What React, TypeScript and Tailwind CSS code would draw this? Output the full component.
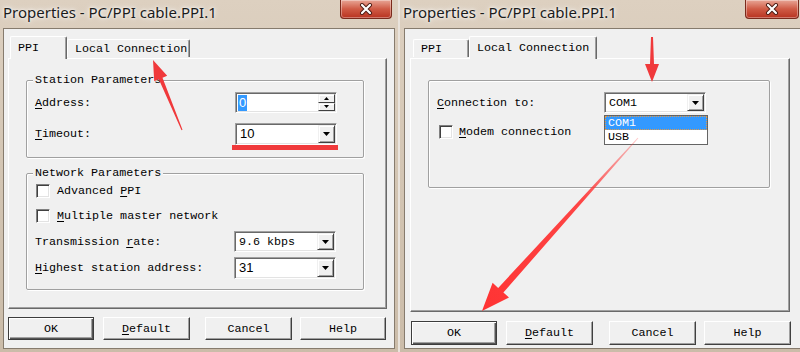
import type { ReactNode } from "react";

const mono = "font-['Liberation_Mono','DejaVu_Sans_Mono',monospace] text-[11.7px] leading-[14px] text-black";

function Acc({ children }: { children: ReactNode }) {
  return <span className="underline underline-offset-[2px]">{children}</span>;
}

function TitleBar({ closeWidth, closeRight }: { closeWidth: number; closeRight: string }) {
  return (
    <div className="flex h-[28px] items-start">
      <span className="pl-[3px] pt-[2px] font-['Noto_Sans',sans-serif] text-[15px] leading-[20px] text-[#1b1b1b] [text-shadow:0_0_6px_#fff,0_0_3px_#fff]">
        Properties - PC/PPI cable.PPI.1
      </span>
      <div
        style={{ width: closeWidth }}
        className={`ml-auto ${closeRight} flex h-[19px] items-center justify-center rounded-b-[4px] border border-t-0 border-[#7a2a1c] bg-linear-to-b from-[#e7a596] via-[#cf5a45] to-[#b8321f] shadow-[inset_0_0_0_1px_rgba(255,255,255,0.35)]`}
      >
        <svg width="16" height="12" viewBox="0 0 16 12">
          <path d="M4 2 L12 10 M12 2 L4 10" stroke="#4a1a12" strokeWidth="4" strokeLinecap="round" />
          <path d="M4 2 L12 10 M12 2 L4 10" stroke="#fff" strokeWidth="2.2" strokeLinecap="round" />
        </svg>
      </div>
    </div>
  );
}

function Tab({ label, active, width, className = "" }: { label: string; active?: boolean; width: number; className?: string }) {
  return (
    <div
      style={{ width }}
      className={`${className} flex items-center rounded-t-[2px] border-l border-r border-t border-l-white border-t-white border-r-[#696969] bg-[#f0f0f0] pl-[7px] shadow-[inset_-1px_0_0_#a0a0a0] ${mono} ${
        active ? "relative z-10 -mb-px h-[23px] pb-[1px]" : "h-[18px]"
      }`}
    >
      {label}
    </div>
  );
}

function Button({ children, width, height, primary }: { children: ReactNode; width: number; height: number; primary?: boolean }) {
  return (
    <div
      style={{ width, height }}
      className={`flex items-center justify-center border ${
        primary ? "border-[#3c3c3c] shadow-[inset_1px_1px_0_#fff,inset_-1px_-1px_0_#555,inset_-2px_-2px_0_#a0a0a0]" : "border-l-white border-t-white border-r-[#404040] border-b-[#404040] shadow-[inset_-1px_-1px_0_#a0a0a0]"
      } bg-[#f0f0f0] ${mono}`}
    >
      {children}
    </div>
  );
}

function DropArrow() {
  return (
    <div className="flex h-full w-[17px] items-center justify-center border border-l-[#f0f0f0] border-t-[#f0f0f0] border-r-[#404040] border-b-[#404040] bg-[#f0f0f0] shadow-[inset_1px_1px_0_#fff,inset_-1px_-1px_0_#a0a0a0]">
      <svg width="7" height="4" viewBox="0 0 7 4">
        <path d="M0 0 H7 L3.5 4 Z" fill="#000" />
      </svg>
    </div>
  );
}

function Sunken({ children, width, height }: { children: ReactNode; width: number; height: number }) {
  return (
    <div
      style={{ width, height }}
      className="flex border border-l-[#a0a0a0] border-t-[#a0a0a0] border-r-white border-b-white bg-white p-px shadow-[inset_1px_1px_0_#696969,inset_-1px_-1px_0_#e3e3e3]"
    >
      {children}
    </div>
  );
}

function Combo({ value, width, height = 21, sans }: { value: string; width: number; height?: number; sans?: boolean }) {
  return (
    <Sunken width={width} height={height}>
      <span className={`flex flex-1 items-center pl-[3px] ${sans ? "font-['Liberation_Sans',sans-serif] text-[13px] text-black" : mono}`}>{value}</span>
      <DropArrow />
    </Sunken>
  );
}

function Spinner() {
  return (
    <Sunken width={102} height={21}>
      <span className="flex flex-1 items-center pl-[1px]">
        <span className="bg-[#3399ff] px-[1px] font-['Liberation_Sans',sans-serif] text-[13px] leading-[16px] text-white">0</span>
      </span>
      <div className="flex w-[17px] flex-col">
        {["M0 4 H5 L2.5 1 Z", "M0 1 H5 L2.5 4 Z"].map((d) => (
          <div key={d} className="flex flex-1 items-center justify-center border border-l-[#f0f0f0] border-t-[#f0f0f0] border-r-[#404040] border-b-[#404040] bg-[#f0f0f0] shadow-[inset_1px_1px_0_#fff]">
            <svg width="5" height="5" viewBox="0 0 5 5">
              <path d={d} fill="#000" />
            </svg>
          </div>
        ))}
      </div>
    </Sunken>
  );
}

function Check() {
  return <div className="h-[14px] w-[14px] shrink-0 border border-l-[#808080] border-t-[#808080] border-r-white border-b-white bg-white shadow-[inset_1px_1px_0_#404040,inset_-1px_-1px_0_#e3e3e3]" />;
}

function Group({ title, width, height, className = "", children }: { title?: string; width: number; height: number; className?: string; children: ReactNode }) {
  return (
    <div
      style={{ width, height }}
      className={`${className} rounded-[2px] border border-[#a0a0a0] shadow-[inset_1px_1px_0_#fff,1px_1px_0_#fff]`}
    >
      {title ? <div className={`-mt-[8px] ml-[6px] w-fit bg-[#f0f0f0] px-[2px] ${mono}`}>{title}</div> : null}
      {children}
    </div>
  );
}

function Row({ label, labelWidth, children, className = "" }: { label: ReactNode; labelWidth: number; children: ReactNode; className?: string }) {
  return (
    <div className={`flex items-center ${className}`}>
      <span style={{ width: labelWidth }} className={`pl-[8px] ${mono}`}>{label}</span>
      {children}
    </div>
  );
}

function PpiDialog() {
  return (
    <div className="flex w-[398px] flex-col bg-linear-to-b from-[#ddd0c0] via-[#d3c5b3] to-[#cbbca9]">
      <TitleBar closeWidth={52} closeRight="mr-[6px]" />
      <div className="mx-[3px] mb-[3px] flex-1 border border-[#867b6d] bg-[#f0f0f0] pl-[4px] pt-[7px]">
        <div className="flex items-end pl-[2px]">
          <Tab label="PPI" active width={57} />
          <Tab label="Local Connection" width={123} className="mb-px" />
        </div>
        <div className="h-[251px] w-[379px] border border-l-white border-t-white border-r-[#696969] border-b-[#696969] shadow-[inset_-1px_-1px_0_#a0a0a0]">
          <Group title="Station Parameters" width={338} height={78} className="ml-[17px] mt-[21px]">
            <Row label={<><Acc>A</Acc>ddress:</>} labelWidth={208} className="mt-[5px]">
              <Spinner />
            </Row>
            <Row label={<><Acc>T</Acc>imeout:</>} labelWidth={208} className="mt-[10px]">
              <Combo value="10" width={102} height={22} sans />
            </Row>
          </Group>
          <Group title="Network Parameters" width={338} height={117} className="ml-[17px] mt-[15px]">
            <div className="ml-[9px] mt-[4px] flex items-center gap-[7px]">
              <Check />
              <span className={mono}>Advanced <Acc>P</Acc>PI</span>
            </div>
            <div className="ml-[9px] mt-[11px] flex items-center gap-[7px]">
              <Check />
              <span className={mono}><Acc>M</Acc>ultiple master network</span>
            </div>
            <Row label={<>Transmission <Acc>r</Acc>ate:</>} labelWidth={207} className="mt-[8px]">
              <Combo value="9.6 kbps" width={102} />
            </Row>
            <Row label={<><Acc>H</Acc>ighest station address:</>} labelWidth={207} className="mt-[5px]">
              <Combo value="31" width={102} height={22} sans />
            </Row>
          </Group>
        </div>
        <div className="mt-[8px] flex">
          <Button width={86} height={23} primary>OK</Button>
          <div className="ml-[9px]"><Button width={87} height={23}><><Acc>D</Acc>efault</></Button></div>
          <div className="ml-[15px]"><Button width={87} height={23}>Cancel</Button></div>
          <div className="ml-[8px]"><Button width={86} height={23}>Help</Button></div>
        </div>
      </div>
    </div>
  );
}

function LocalDialog() {
  return (
    <div className="flex w-[400px] flex-col bg-linear-to-b from-[#ddd0c0] via-[#d3c5b3] to-[#cbbca9]">
      <TitleBar closeWidth={54} closeRight="mr-[1px]" />
      <div className="mb-[3px] ml-[4px] flex-1 border border-r-0 border-[#867b6d] bg-[#f0f0f0] pl-[5px] pt-[7px]">
        <div className="flex items-end pl-[3px]">
          <Tab label="PPI" width={56} className="mb-px" />
          <Tab label="Local Connection" active width={128} />
        </div>
        <div className="h-[254px] w-[380px] border border-l-white border-t-white border-r-[#696969] border-b-[#696969] shadow-[inset_-1px_-1px_0_#a0a0a0]">
          <Group width={342} height={108} className="ml-[17px] mt-[21px]">
            <Row label={<><Acc>C</Acc>onnection to:</>} labelWidth={175} className="mt-[11px]">
              <div className="relative">
                <Combo value="COM1" width={102} />
                <div className="absolute left-0 top-[23px] z-20 w-[104px] border border-[#646464] bg-white">
                  <div className="h-[14px] border border-dotted border-[#e29a48] bg-[#3399ff] pl-[2px] font-['Liberation_Mono','DejaVu_Sans_Mono',monospace] text-[11.7px] leading-[12px] text-white">COM1</div>
                  <div className={`h-[14px] pl-[3px] ${mono}`}>USB</div>
                </div>
              </div>
            </Row>
            <div className="ml-[10px] mt-[12px] flex items-center gap-[6px]">
              <Check />
              <span className={mono}><Acc>M</Acc>odem connection</span>
            </div>
          </Group>
        </div>
        <div className="mt-[9px] flex pl-[1px]">
          <Button width={86} height={24} primary>OK</Button>
          <div className="ml-[9px]"><Button width={87} height={24}><><Acc>D</Acc>efault</></Button></div>
          <div className="ml-[16px]"><Button width={87} height={24}>Cancel</Button></div>
          <div className="ml-[8px]"><Button width={87} height={24}>Help</Button></div>
        </div>
      </div>
    </div>
  );
}

export default function App() {
  return (
    <div className="relative flex h-[352px] w-[800px] gap-[2px] overflow-hidden bg-[#e9e3dc]">
      <PpiDialog />
      <LocalDialog />
      {/* red annotations */}
      <svg className="pointer-events-none absolute left-0 top-0 z-30" width="800" height="352" viewBox="0 0 800 352">
        <defs>
          <linearGradient id="fade" x1="638" y1="138" x2="482" y2="311" gradientUnits="userSpaceOnUse">
            <stop offset="0" stopColor="#f33" stopOpacity="0.25" />
            <stop offset="0.35" stopColor="#f33" stopOpacity="0.9" />
            <stop offset="1" stopColor="#f33" />
          </linearGradient>
        </defs>
        <rect x="232" y="145" width="106" height="5" fill="#f0393b" />
        <polygon points="153,60 167.2,75.8 162.5,77.7 182.5,129.8 181.5,130.2 158.8,79.3 154.2,81.2" fill="#f0393b" />
        <polygon points="652,82 659,64 654,64 653,37 651,37 650,64 645,64" fill="#f0393b" />
        <polygon points="482,311 509,297.6 503.4,292.5 638.4,138.3 637.6,137.7 498.2,287.9 492.6,282.8" fill="url(#fade)" />
      </svg>
    </div>
  );
}
